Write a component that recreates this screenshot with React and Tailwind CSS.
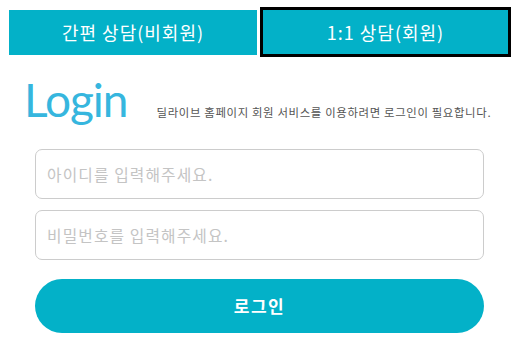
import React from 'react';

const KR = "font-['Noto_Sans_CJK_KR','Noto_Sans',sans-serif]";

export default function App() {
  return (
    <div className={`w-[519px] h-[353px] bg-white overflow-hidden ${KR}`}>
      {/* tabs */}
      <div className="flex items-center gap-[3px] pl-[9px] pt-[7px]">
        <button className="w-[248px] h-[45px] bg-[#03b1c8] text-white text-[18px] tracking-[1px] flex items-center justify-center">
          간편 상담(비회원)
        </button>
        <button className="w-[251px] h-[50px] bg-[#03b1c8] border-[3px] border-black text-white text-[18px] tracking-[1px] flex items-center justify-center">
          1:1 상담(회원)
        </button>
      </div>

      {/* heading */}
      <div className="flex items-end pl-[24px] mt-[14px] h-[52px]">
        <h1 className="font-['Lato',sans-serif] text-[46px] leading-none text-[#36b6de] tracking-[-1px]">Login</h1>
        <p className="ml-[29px] mb-[5px] text-[11.4px] leading-none tracking-[0.65px] text-[#555]">
          딜라이브 홈페이지 회원 서비스를 이용하려면 로그인이 필요합니다.
        </p>
      </div>

      {/* form */}
      <div className="px-[35px] mt-[26px] flex flex-col">
        <input
          className="h-[50px] w-full border border-[#cccccc] rounded-[7px] px-[11px] text-[15.8px] tracking-[1.1px] placeholder:text-[#c4c4c4] outline-none"
          placeholder="아이디를 입력해주세요."
        />
        <input
          type="password"
          className="h-[50px] w-full mt-[11px] border border-[#cccccc] rounded-[7px] px-[11px] text-[15.8px] tracking-[1.1px] placeholder:text-[#c4c4c4] outline-none"
          placeholder="비밀번호를 입력해주세요."
        />
        <button className="h-[54px] w-full mt-[19px] rounded-full bg-[#03b1c8] text-white text-[17px] tracking-[1.5px] font-bold">
          로그인
        </button>
      </div>
    </div>
  );
}
